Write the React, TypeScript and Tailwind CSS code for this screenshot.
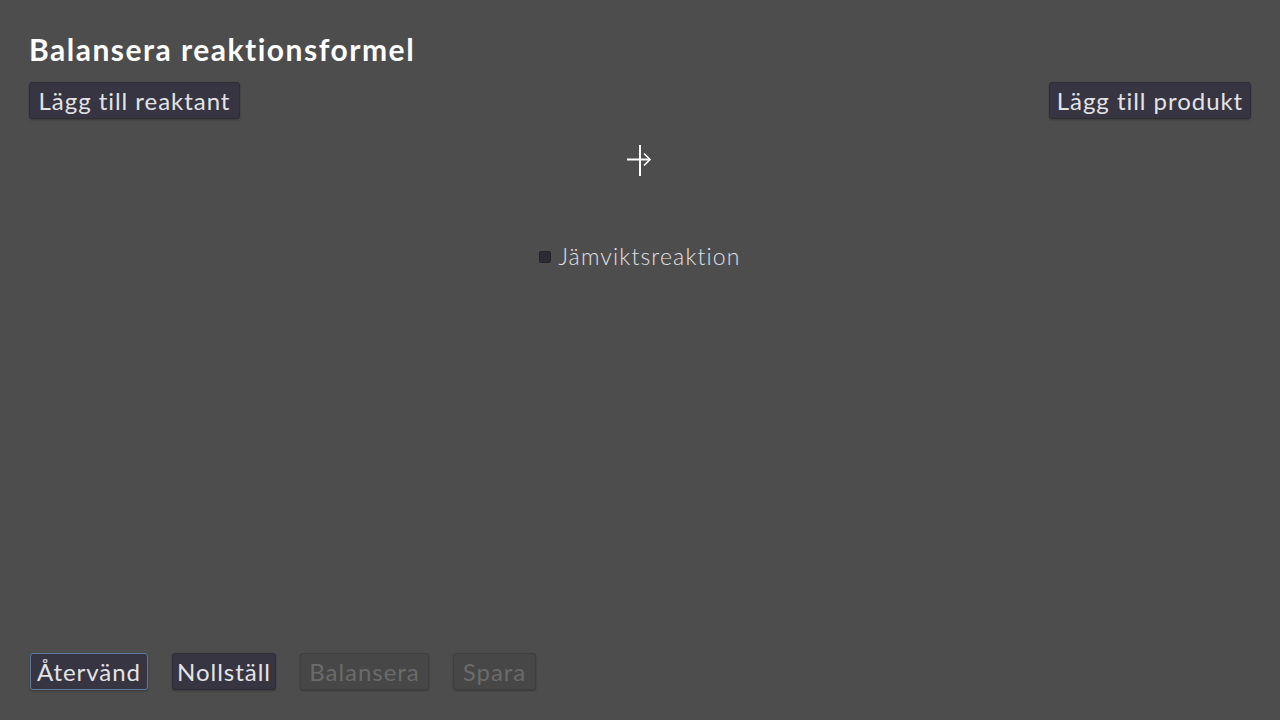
import React from "react";

const font = { fontFamily: "Lato, 'Noto Sans', sans-serif" };

const Btn = ({
  label,
  width,
  disabled,
  focused,
}: {
  label: string;
  width: string;
  disabled?: boolean;
  focused?: boolean;
}) => (
  <button
    className={
      width +
      " h-[37px] shrink-0 flex items-center justify-center whitespace-nowrap rounded-[3px] border text-[24px] tracking-[0.04em] leading-none shadow-[0_1px_2px_rgba(0,0,0,0.25)] " +
      (disabled
        ? "border-[#3f3f3f] bg-[#474747] text-[#6b6b6b]"
        : focused
        ? "border-[#5d7a9c] bg-[#363541] text-[#e3e3e6]"
        : "border-[#2e2d36] bg-[#363541] text-[#e3e3e6]")
    }
  >
    {label}
  </button>
);

export default function App() {
  return (
    <div
      style={font}
      className="w-[1280px] h-[720px] bg-[#4d4d4d] flex flex-col px-[29px] pt-[30px] pb-[30px] overflow-hidden"
    >
      <h1 className="text-[30px] font-bold text-white leading-[38px] tracking-[0.05em]">
        Balansera reaktionsformel
      </h1>
      <div className="flex justify-between mt-[14px]">
        <Btn label="Lägg till reaktant" width="w-[211px]" />
        <Btn label="Lägg till produkt" width="w-[202px]" />
      </div>

      {/* reaction arrow */}
      <div className="flex justify-center mt-[26px]">
        <svg width="26" height="32" viewBox="0 0 26 32">
          <line x1="13" y1="0" x2="13" y2="31" stroke="#ffffff" strokeWidth="2" />
          <line x1="0" y1="14.5" x2="23" y2="14.5" stroke="#ffffff" strokeWidth="2" />
          <polyline points="17,8.5 23,14.5 17,20.5" fill="none" stroke="#ffffff" strokeWidth="1.6" />
        </svg>
      </div>

      <div className="flex justify-center items-center gap-[7px] mt-[68px]">
        <span className="w-[12px] h-[12px] rounded-[2px] bg-[#2c2b33] border border-[#24232a]" />
        <span className="text-[23px] text-[#e0e0e3] font-light leading-none tracking-[0.05em]">
          Jämviktsreaktion
        </span>
      </div>

      <div className="flex-1" />

      <div className="flex gap-[24px] pl-px">
        <Btn label="Återvänd" width="w-[118px]" focused />
        <Btn label="Nollställ" width="w-[104px]" />
        <Btn label="Balansera" width="w-[129px]" disabled />
        <Btn label="Spara" width="w-[83px]" disabled />
      </div>
    </div>
  );
}
